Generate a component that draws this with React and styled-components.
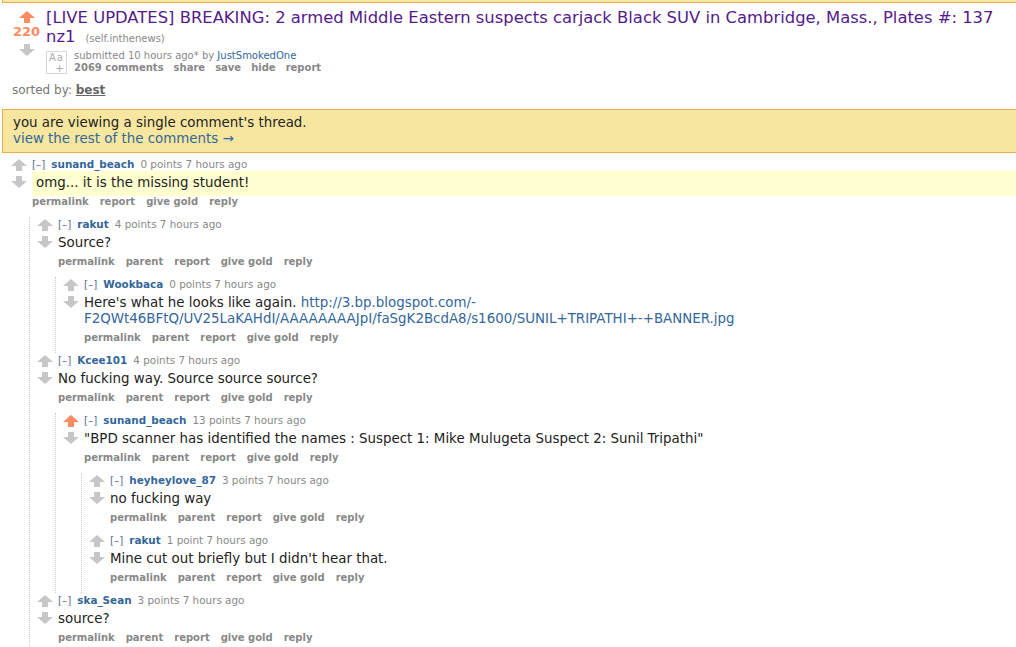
import React from "react";
import styled, { createGlobalStyle } from "styled-components";

const Global = createGlobalStyle`
  html, body { margin: 0; padding: 0; background: #fff; overflow-x: hidden; }
  body { font-family: "DejaVu Sans", Verdana, sans-serif; color: #222; }
  a { text-decoration: none; }
`;

const FONT = `"DejaVu Sans", Verdana, sans-serif`;

const TopStrip = styled.div`
  height: 2px;
  margin-left: 2px;
  background: #f6e69f;
  border-bottom: 1px solid #e5b04b;
  border-left: 1px solid #e5b04b;
`;

const Post = styled.div`
  display: flex;
  padding-left: 8px;
  padding-top: 1px;
`;

const PostMidcol = styled.div`
  width: 37px;
  display: flex;
  flex-direction: column;
  align-items: center;
  padding-top: 7px;
`;

const Score = styled.div`
  font: bold 13px/16px ${FONT};
  color: #ff8b60;
  margin: 1px 0 4px;
`;

const PostEntry = styled.div`
  margin-left: 1px;
  padding-top: 4px;
`;

const Title = styled.div`
  font: 16.4px/19px ${FONT};
  color: #551a8b;
  white-space: nowrap;
`;

const Domain = styled.span`
  font-size: 10px;
  color: #888;
  margin-left: 10px;
`;

const PostMeta = styled.div`
  display: flex;
  margin-top: 2px;
`;

const Thumb = styled.div`
  position: relative;
  width: 19px;
  height: 21px;
  border: 1px solid #d8d8d8;
  margin-top: 1px;
  margin-right: 7px;
  font: 10px/9px ${FONT};
  color: #aaa;
`;

const ThumbAa = styled.span`
  position: absolute;
  left: 2px;
  top: 1px;
  letter-spacing: 1px;
`;

const ThumbPlus = styled.span`
  position: absolute;
  right: 2px;
  bottom: 0;
  font-size: 10px;
  line-height: 9px;
`;

const PostTagline = styled.div`
  font: 10px/12px ${FONT};
  color: #888;
`;

const Author = styled.a`
  color: #369;
`;

const FlatList = styled.ul`
  list-style: none;
  margin: 0;
  padding: 0;
  display: flex;
  gap: ${(p) => p.$gap || 11}px;
  font: bold 10px/12px ${FONT};
  color: #888;
`;

const SortedBy = styled.div`
  margin: 9px 0 0 12px;
  font: 12px/15px ${FONT};
  color: #777;
`;

const SortLink = styled.span`
  font-weight: bold;
  text-decoration: underline;
  color: #666;
`;

const InfoBar = styled.div`
  margin: 11px 0 0 2px;
  background: #f6e69f;
  border: 1px solid #e5b04b;
  border-right: none;
  padding: 5px 10px;
  font: 13.4px/16px ${FONT};
  color: #222;
`;

const InfoLink = styled.a`
  color: #369;
`;

const CommentArea = styled.div`
  margin-top: 4px;
  padding-left: 11px;
`;

const CommentBox = styled.div`
  display: grid;
  grid-template-columns: 21px 1fr;
`;

const Midcol = styled.div`
  display: flex;
  flex-direction: column;
  gap: 5px;
  padding-top: 2px;
`;

const Entry = styled.div`
  min-width: 0;
`;

const Tagline = styled.div`
  display: flex;
  align-items: center;
  height: 14px;
  font: 10.4px/14px ${FONT};
  color: #888;
  white-space: nowrap;
`;

const Expand = styled.span`
  color: #5d6f92;
  margin-right: 6px;
`;

const User = styled.a`
  color: #369;
  font-weight: bold;
  margin-right: 6px;
`;

const Body = styled.div`
  font: 13.4px/16px ${FONT};
  color: #222;
  padding: 4px 0 5px ${(p) => (p.$highlight ? 4 : 0)}px;
  background: ${(p) => (p.$highlight ? "#ffffd0" : "transparent")};
  white-space: nowrap;
`;

const BodyLink = styled.a`
  color: #369;
`;

const Buttons = styled(FlatList)`
  height: 12px;
  margin-bottom: 9px;
`;

const Child = styled.div`
  grid-column: 1 / -1;
  margin-left: 18px;
  border-left: 1px dotted #ccc;
  padding-left: 7px;
`;

const Arrow = ({ down, active }) => (
  <svg width="16" height="12" viewBox="0 0 16 12" style={{ display: "block" }}>
    <polygon
      points="8,0 16,7 11,7 11,12 5,12 5,7 0,7"
      fill={active ? "#ff8b60" : "#c6c6c6"}
      transform={down ? "rotate(180 8 6)" : undefined}
    />
  </svg>
);

const Comment = ({ user, points, body, up, highlight, parent = true, children }) => (
  <CommentBox>
    <Midcol>
      <Arrow active={up} />
      <Arrow down />
    </Midcol>
    <Entry>
      <Tagline>
        <Expand>[–]</Expand>
        <User>{user}</User>
        <span>{points} 7 hours ago</span>
      </Tagline>
      <Body $highlight={highlight}>{body}</Body>
      <Buttons>
        <li>permalink</li>
        {parent && <li>parent</li>}
        <li>report</li>
        <li>give gold</li>
        <li>reply</li>
      </Buttons>
    </Entry>
    {children && <Child>{children}</Child>}
  </CommentBox>
);

export default function App() {
  return (
    <>
      <Global />
      <TopStrip />
      <Post>
        <PostMidcol>
          <Arrow active />
          <Score>220</Score>
          <Arrow down />
        </PostMidcol>
        <PostEntry>
          <Title>
            [LIVE UPDATES] BREAKING: 2 armed Middle Eastern suspects carjack Black SUV in Cambridge, Mass., Plates #: 137
            <br />
            nz1<Domain>(self.inthenews)</Domain>
          </Title>
          <PostMeta>
            <Thumb>
              <ThumbAa>Aa</ThumbAa>
              <ThumbPlus>+</ThumbPlus>
            </Thumb>
            <div>
              <PostTagline>
                submitted 10 hours ago* by <Author>JustSmokedOne</Author>
              </PostTagline>
              <FlatList $gap={10}>
                <li>2069 comments</li>
                <li>share</li>
                <li>save</li>
                <li>hide</li>
                <li>report</li>
              </FlatList>
            </div>
          </PostMeta>
        </PostEntry>
      </Post>
      <SortedBy>
        sorted by: <SortLink>best</SortLink>
      </SortedBy>
      <InfoBar>
        you are viewing a single comment's thread.
        <br />
        <InfoLink>view the rest of the comments →</InfoLink>
      </InfoBar>
      <CommentArea>
        <Comment
          user="sunand_beach"
          points="0 points"
          body="omg... it is the missing student!"
          highlight
          parent={false}
        >
          <Comment user="rakut" points="4 points" body="Source?">
            <Comment
              user="Wookbaca"
              points="0 points"
              body={
                <>
                  Here's what he looks like again.{" "}
                  <BodyLink>
                    http://3.bp.blogspot.com/-
                    <br />
                    F2QWt46BFtQ/UV25LaKAHdI/AAAAAAAAJpI/faSgK2BcdA8/s1600/SUNIL+TRIPATHI+-+BANNER.jpg
                  </BodyLink>
                </>
              }
            />
          </Comment>
          <Comment user="Kcee101" points="4 points" body="No fucking way. Source source source?">
            <Comment
              user="sunand_beach"
              points="13 points"
              up
              body={'"BPD scanner has identified the names : Suspect 1: Mike Mulugeta Suspect 2: Sunil Tripathi"'}
            >
              <Comment user="heyheylove_87" points="3 points" body="no fucking way" />
              <Comment user="rakut" points="1 point" body="Mine cut out briefly but I didn't hear that." />
            </Comment>
          </Comment>
          <Comment user="ska_Sean" points="3 points" body="source?" />
        </Comment>
      </CommentArea>
    </>
  );
}
